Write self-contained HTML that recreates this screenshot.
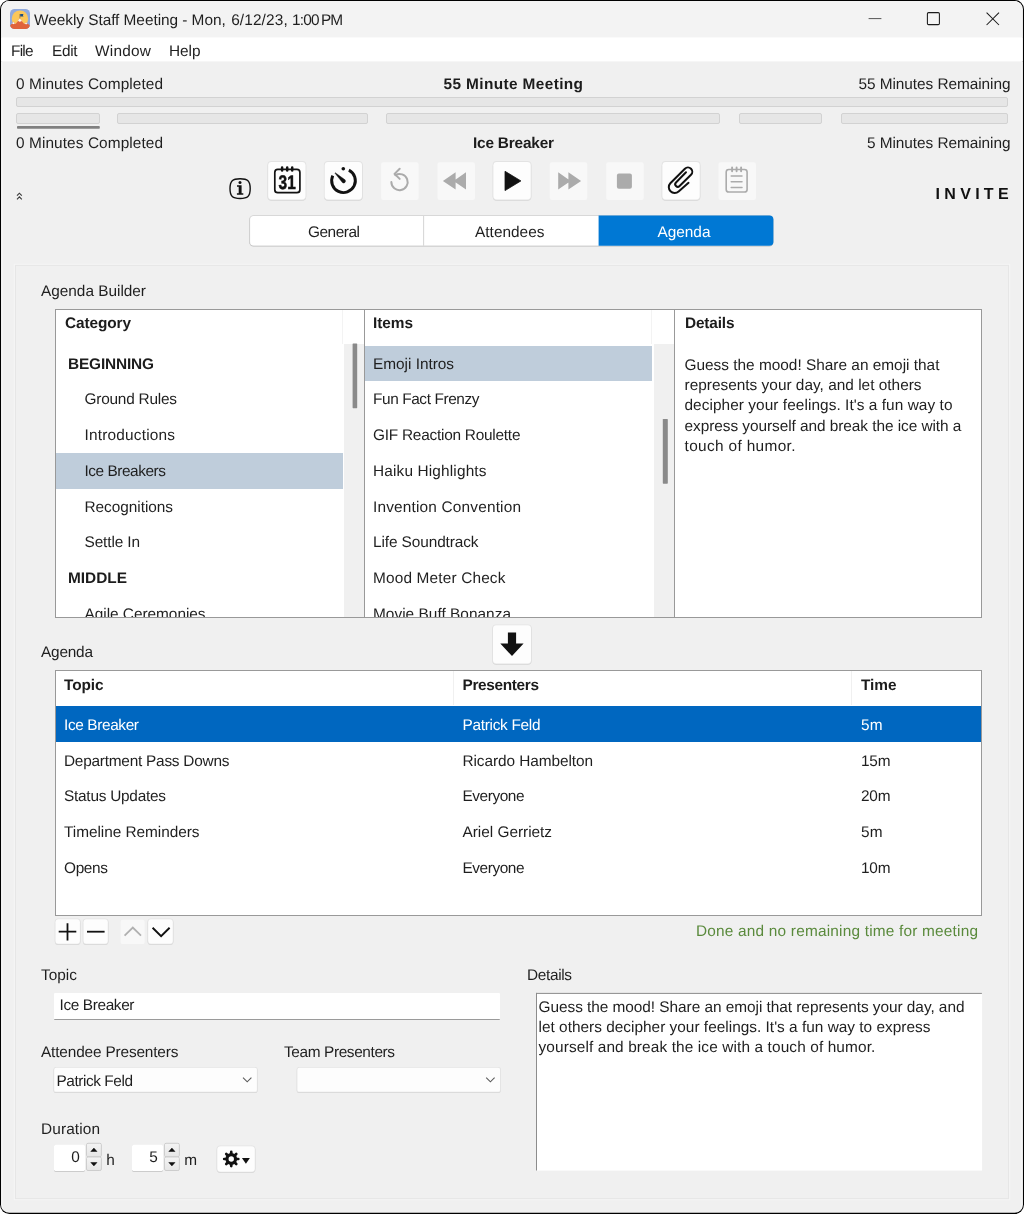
<!DOCTYPE html>
<html lang="en">
<head>
<meta charset="utf-8">
<title>Weekly Staff Meeting - Mon, 6/12/23, 1:00 PM</title>
<style>
html,body{margin:0;padding:0;}
body{width:1024px;height:1214px;overflow:hidden;background:#fff;font-family:"Liberation Sans", sans-serif;color:#1f1f1f;text-rendering:geometricPrecision;}
#win{will-change:transform;position:relative;width:1024px;height:1214px;overflow:hidden;}
.a{position:absolute;box-sizing:border-box;}
.t{position:absolute;white-space:pre;}
svg{position:absolute;overflow:visible;}
</style>
</head>
<body>
<div id="win">
<svg style="left:0;top:0" width="1024" height="1214" viewBox="0 0 1024 1214"><defs><clipPath id="wc"><rect x="1.1" y="1.1" width="1021.7" height="1211.7" rx="8.2"/></clipPath></defs><rect x="0" y="0" width="1024" height="1214" rx="9.4" fill="#000"/><g clip-path="url(#wc)"><rect x="0" y="0" width="1024" height="1214" fill="#f0f0f0"/><rect x="0" y="62" width="3" height="1152" fill="#f4f4f4"/><rect x="1020.8" y="62" width="4" height="1152" fill="#f4f4f4"/><rect x="0" y="0" width="1024" height="37.4" fill="#f3f3f3"/><rect x="0" y="37.4" width="1024" height="24" fill="#ffffff"/></g></svg>
<svg style="left:9.9px;top:9px" width="20" height="20" viewBox="0 0 20 20">
<defs><clipPath id="ic"><rect x="0" y="0" width="20" height="20" rx="4.6"/></clipPath></defs>
<g clip-path="url(#ic)">
<rect width="20" height="20" fill="#90a9dc"/>
<circle cx="9.95" cy="9.65" r="8.2" fill="#fbc75a"/>
<path d="M9.8 9.2L12.2 12.4L14.2 15L16.1 13.5L20 16.6V20H0V16.4L3.5 12.9L5.6 15L7.6 12.4Z" fill="#e0633c"/>
<path d="M9.8 9.2L12.3 12.6L11.2 12.1L9.9 12.9L8.6 12.1L7.5 12.6Z" fill="#f4f6fb"/>
<path d="M3.5 12.9L5.5 15L4.4 14.6L3.5 15.2L2.6 14.6L1.3 15.1Z" fill="#f4f6fb"/>
<path d="M16.1 13.5L18 15.2L17 14.8L16.1 15.4L15.2 14.8L14.3 15.1Z" fill="#f4f6fb"/>
<path d="M9.9 9.4V5" stroke="#5a4a3a" stroke-width="0.5" fill="none"/>
<path d="M10.2 5.1H13.5L12.9 6.3L13.5 7.5H10.2Z" fill="#1f4f82"/>
</g></svg>
<span class="t" style="left:34px;top:10px;font-size:15.4px;line-height:22px;letter-spacing:-0.04px;">Weekly Staff Meeting - Mon, </span>
<span class="t" style="left:231.2px;top:10px;font-size:15.4px;line-height:22px;letter-spacing:0.12px;">6/12/23, </span>
<span class="t" style="left:292.1px;top:10px;font-size:15.4px;line-height:22px;letter-spacing:-0.84px;">1:00 PM</span>
<svg style="left:860px;top:8px" width="150" height="24" viewBox="860 8 150 24" fill="none" stroke="#1a1a1a">
<path d="M868.6 18.6H881.4" stroke="#555" stroke-width="1"/>
<rect x="927.4" y="12.6" width="12" height="12" rx="1.2" stroke-width="1.05"/>
<path d="M986.6 12.6L999 25M999 12.6L986.6 25" stroke-width="1.05"/>
</svg>
<span class="t" style="left:11px;top:41px;font-size:15.4px;line-height:22px;letter-spacing:-0.77px;">File</span>
<span class="t" style="left:52px;top:41px;font-size:15.4px;line-height:22px;letter-spacing:-0.34px;">Edit</span>
<span class="t" style="left:95px;top:41px;font-size:15.4px;line-height:22px;letter-spacing:0.25px;">Window</span>
<span class="t" style="left:169px;top:41px;font-size:15.4px;line-height:22px;letter-spacing:-0.05px;">Help</span>
<span class="t" style="left:16px;top:74px;font-size:15.4px;line-height:22px;letter-spacing:0.09px;">0 Minutes Completed</span>
<span class="t" style="left:443.5px;top:74px;font-size:15.4px;line-height:22px;font-weight:700;color:#1c1c1c;letter-spacing:0.38px;">55 Minute Meeting</span>
<span class="t" style="left:858.5px;top:74px;font-size:15.4px;line-height:22px;letter-spacing:-0.06px;">55 Minutes Remaining</span>
<div class="a" style="left:16px;top:97px;width:992px;height:10px;background:#e6e6e6;border:1px solid #d2d2d2;border-radius:2px;"></div>
<div class="a" style="left:16px;top:113px;width:84px;height:11px;background:#e6e6e6;border:1px solid #d2d2d2;border-radius:2px;"></div>
<div class="a" style="left:117px;top:113px;width:251px;height:11px;background:#e6e6e6;border:1px solid #d2d2d2;border-radius:2px;"></div>
<div class="a" style="left:386px;top:113px;width:334px;height:11px;background:#e6e6e6;border:1px solid #d2d2d2;border-radius:2px;"></div>
<div class="a" style="left:739px;top:113px;width:83px;height:11px;background:#e6e6e6;border:1px solid #d2d2d2;border-radius:2px;"></div>
<div class="a" style="left:841px;top:113px;width:167px;height:11px;background:#e6e6e6;border:1px solid #d2d2d2;border-radius:2px;"></div>
<svg style="left:10px;top:120px" width="100" height="12" viewBox="10 120 100 12"><rect x="17" y="126.1" width="82.8" height="2.6" rx="0.8" fill="#808080"/></svg>
<span class="t" style="left:16px;top:133px;font-size:15.4px;line-height:22px;letter-spacing:0.09px;">0 Minutes Completed</span>
<span class="t" style="left:473px;top:133px;font-size:15.4px;line-height:22px;font-weight:700;color:#1c1c1c;letter-spacing:-0.2px;">Ice Breaker</span>
<span class="t" style="left:867px;top:133px;font-size:15.4px;line-height:22px;letter-spacing:-0.06px;">5 Minutes Remaining</span>
<svg style="left:0;top:150px" width="1024" height="60" viewBox="0 150 1024 60"><path d="M17 195.6L19.4 193.2L21.8 195.6M17 199.3L19.4 196.9L21.8 199.3" fill="none" stroke="#3a3a3a" stroke-width="1.15"/><path d="M240.1 178.7C247.6 178.7 250.2 180.6 250.2 188.6C250.2 196.6 247.6 198.5 240.1 198.5C232.6 198.5 230 196.6 230 188.6C230 180.6 232.6 178.7 240.1 178.7Z" fill="none" stroke="#111" stroke-width="1.4"/><circle cx="240" cy="182.5" r="1.5" fill="#111"/><path d="M237 185.2H241.6V193.3H243.3V194.8H236.9V193.3H238.7V186.7H237Z" fill="#111"/><rect x="267.6" y="162.0" width="38.5" height="38.8" rx="4" fill="#d2d2d2"/><rect x="267.4" y="161.1" width="38.9" height="39.2" rx="4" fill="#e3e3e3"/><rect x="268.2" y="161.9" width="37.3" height="37.6" rx="3.4" fill="#fdfdfd"/><rect x="324.1" y="162.0" width="38.5" height="38.8" rx="4" fill="#d2d2d2"/><rect x="323.9" y="161.1" width="38.9" height="39.2" rx="4" fill="#e3e3e3"/><rect x="324.7" y="161.9" width="37.3" height="37.6" rx="3.4" fill="#fdfdfd"/><rect x="381.10" y="162.30" width="37.50" height="37.60" rx="2.2" fill="#f8f8f8"/><rect x="437.50" y="162.30" width="37.50" height="37.60" rx="2.2" fill="#f8f8f8"/><rect x="492.8" y="162.0" width="38.5" height="38.8" rx="4" fill="#d2d2d2"/><rect x="492.6" y="161.1" width="38.9" height="39.2" rx="4" fill="#e3e3e3"/><rect x="493.4" y="161.9" width="37.3" height="37.6" rx="3.4" fill="#fdfdfd"/><rect x="549.80" y="162.30" width="37.50" height="37.60" rx="2.2" fill="#f8f8f8"/><rect x="606.20" y="162.30" width="37.50" height="37.60" rx="2.2" fill="#f8f8f8"/><rect x="661.8" y="162.0" width="38.5" height="38.8" rx="4" fill="#d2d2d2"/><rect x="661.6" y="161.1" width="38.9" height="39.2" rx="4" fill="#e3e3e3"/><rect x="662.4" y="161.9" width="37.3" height="37.6" rx="3.4" fill="#fdfdfd"/><rect x="718.50" y="162.30" width="37.50" height="37.60" rx="2.2" fill="#f8f8f8"/><rect x="274.8" y="169.4" width="25.1" height="23.3" rx="3" fill="none" stroke="#111" stroke-width="1.7"/><path d="M282.1 167.6V170.6M287.2 167.6V170.6M292.2 167.6V170.6" stroke="#111" stroke-width="2.5" stroke-linecap="round"/><text transform="translate(287.2 188.7) scale(0.78 1)" text-anchor="middle" font-family="'Liberation Sans',sans-serif" font-weight="700" font-size="19.8" fill="#111" stroke="#111" stroke-width="0.5">31</text><path d="M348.88 170.14A11.85 11.85 0 1 1 332.76 175.7" fill="none" stroke="#111" stroke-width="2.9"/><circle cx="343.3" cy="168.8" r="1.8" fill="#111"/><path d="M335.31 172.69L345.04 179.86A1.9 1.9 0 0 1 342.36 182.54L334.89 173.11Z" fill="#111" stroke="#111" stroke-width="0.4" stroke-linejoin="round"/><path d="M395.3 175.1A8.15 8.15 0 1 1 391.35 182.1" fill="none" stroke="#ababab" stroke-width="2" stroke-linecap="round"/><path d="M399.7 168.8L394.5 173.9L399.7 178.9" fill="none" stroke="#ababab" stroke-width="2" stroke-linecap="round" stroke-linejoin="round"/><path d="M455.6 172.2V189.6L442.9 180.9Z M466 172.2V189.6L453.6 180.9Z" fill="#ababab"/><path d="M505 171.3L520.9 180.9L505 190.6Z" fill="#111" stroke="#111" stroke-width="0.8" stroke-linejoin="round"/><path d="M558.2 172.2V189.6L570.6 180.9Z M568.4 172.2V189.6L581.1 180.9Z" fill="#ababab"/><rect x="616.9" y="173.6" width="15" height="15.2" rx="2" fill="#ababab"/><path d="M688.54 182.85L678.62 191.48A5.86 5.86 0 0 1 670.34 183.2L684.91 168.67A4.3 4.3 0 0 1 691 174.77L679.59 186.02A2.54 2.54 0 0 1 676 182.42L686 172.3" fill="none" stroke="#111" stroke-width="2" stroke-linecap="round" stroke-linejoin="round"/><rect x="726.2" y="169.5" width="20.9" height="22.5" rx="2.6" fill="none" stroke="#ababab" stroke-width="1.6"/><path d="M732.1 167.4V171.2M736.6 167.4V171.2M741.1 167.4V171.2" stroke="#ababab" stroke-width="1.9" stroke-linecap="round"/><path d="M731.2 176.1H742M731.2 181.7H742M731.2 187.4H742" stroke="#ababab" stroke-width="1.5" stroke-linecap="round"/></svg>
<span class="t" style="left:935.6px;top:184px;font-size:16px;line-height:22px;font-weight:700;color:#111;letter-spacing:4.29px;">INVITE</span>
<svg style="left:240px;top:210px" width="540" height="42" viewBox="240 210 540 42"><rect x="249.3" y="215.7" width="524" height="30.9" rx="4.2" fill="#b9b9b9"/><rect x="249.3" y="215.2" width="524" height="30.9" rx="4.2" fill="#d4d4d4"/><rect x="250.1" y="216" width="522.4" height="29.6" rx="3.5" fill="#ffffff"/><rect x="423.2" y="216" width="0.9" height="29.8" fill="#d0d0d0"/><path d="M598.6 215.6H769.4A4 4 0 0 1 773.4 219.6V241.8A4 4 0 0 1 769.4 245.8H598.6Z" fill="#0078d4"/></svg>
<span class="t" style="left:308px;top:222px;font-size:15.4px;line-height:22px;letter-spacing:-0.46px;">General</span>
<span class="t" style="left:475px;top:222px;font-size:15.4px;line-height:22px;letter-spacing:0.02px;">Attendees</span>
<span class="t" style="left:657.5px;top:222px;font-size:15.4px;line-height:22px;color:#ffffff;letter-spacing:-0.02px;">Agenda</span>
<svg style="left:0;top:260px" width="1024" height="945" viewBox="0 260 1024 945" fill="none"><rect x="14.2" y="264.3" width="995.6" height="935.4" stroke="#f5f5f5" stroke-width="1"/><rect x="15.55" y="265.4" width="993" height="933.2" stroke="#e5e5e5" stroke-width="0.9"/></svg>
<span class="t" style="left:41px;top:281px;font-size:15.4px;line-height:22px;letter-spacing:-0.02px;">Agenda Builder</span>
<div class="a" style="left:55px;top:309px;width:927px;height:308.5px;background:#ffffff;border:1px solid #999999;"></div>
<div class="a" style="left:364px;top:310px;width:1px;height:306.5px;background:#999999;"></div>
<div class="a" style="left:674px;top:310px;width:1px;height:306.5px;background:#999999;"></div>
<div class="a" style="left:56px;top:452.75px;width:286.5px;height:35.75px;background:#bfcddb;"></div>
<div class="a" style="left:344px;top:344px;width:20px;height:272.5px;background:#f0f0f0;"></div>
<div class="a" style="left:342px;top:310px;width:1px;height:34px;background:#f3f3f3;"></div>
<svg style="left:340px;top:340px" width="30" height="80" viewBox="340 340 30 80"><rect x="352.6" y="343.4" width="4.6" height="64.8" rx="0.6" fill="#8a8a8a"/></svg>
<span class="t" style="left:65px;top:313px;font-size:15.4px;line-height:22px;font-weight:700;color:#1c1c1c;letter-spacing:-0.1px;">Category</span>
<div class="a" style="left:365px;top:345.5px;width:287px;height:35.75px;background:#bfcddb;"></div>
<div class="a" style="left:653.5px;top:344px;width:20.5px;height:272.5px;background:#f0f0f0;"></div>
<div class="a" style="left:651px;top:310px;width:1px;height:34px;background:#f3f3f3;"></div>
<svg style="left:650px;top:410px" width="30" height="80" viewBox="650 410 30 80"><rect x="662.8" y="418.9" width="5" height="64.8" rx="0.6" fill="#8a8a8a"/></svg>
<span class="t" style="left:373px;top:313px;font-size:15.4px;line-height:22px;font-weight:700;color:#1c1c1c;letter-spacing:-0.05px;">Items</span>
<div class="a" style="left:56px;top:310px;width:925px;height:306.5px;overflow:hidden;background:transparent">
<span class="t" style="left:12px;top:44px;font-size:15.4px;line-height:22px;font-weight:700;color:#1c1c1c;letter-spacing:-0.15px;">BEGINNING</span>
<span class="t" style="left:28.5px;top:79px;font-size:15.4px;line-height:22px;letter-spacing:-0.22px;">Ground Rules</span>
<span class="t" style="left:28.5px;top:115px;font-size:15.4px;line-height:22px;letter-spacing:0.2px;">Introductions</span>
<span class="t" style="left:28.5px;top:151px;font-size:15.4px;line-height:22px;letter-spacing:-0.45px;">Ice Breakers</span>
<span class="t" style="left:28.5px;top:187px;font-size:15.4px;line-height:22px;letter-spacing:-0.04px;">Recognitions</span>
<span class="t" style="left:28.5px;top:222px;font-size:15.4px;line-height:22px;letter-spacing:-0.12px;">Settle In</span>
<span class="t" style="left:12px;top:258px;font-size:15.4px;line-height:22px;font-weight:700;color:#1c1c1c;">MIDDLE</span>
<span class="t" style="left:28.5px;top:294px;font-size:15.4px;line-height:22px;letter-spacing:-0.03px;">Agile Ceremonies</span>
<span class="t" style="left:317px;top:44px;font-size:15.4px;line-height:22px;letter-spacing:-0.02px;">Emoji Intros</span>
<span class="t" style="left:317px;top:79px;font-size:15.4px;line-height:22px;letter-spacing:-0.4px;">Fun Fact Frenzy</span>
<span class="t" style="left:317px;top:115px;font-size:15.4px;line-height:22px;letter-spacing:-0.24px;">GIF Reaction Roulette</span>
<span class="t" style="left:317px;top:151px;font-size:15.4px;line-height:22px;letter-spacing:0.15px;">Haiku Highlights</span>
<span class="t" style="left:317px;top:187px;font-size:15.4px;line-height:22px;letter-spacing:0.18px;">Invention Convention</span>
<span class="t" style="left:317px;top:222px;font-size:15.4px;line-height:22px;letter-spacing:-0.1px;">Life Soundtrack</span>
<span class="t" style="left:317px;top:258px;font-size:15.4px;line-height:22px;letter-spacing:0.16px;">Mood Meter Check</span>
<span class="t" style="left:317px;top:294px;font-size:15.4px;line-height:22px;letter-spacing:0.03px;">Movie Buff Bonanza</span>
</div>
<span class="t" style="left:685px;top:313px;font-size:15.4px;line-height:22px;font-weight:700;color:#1c1c1c;letter-spacing:-0.16px;">Details</span>
<span class="t" style="left:684.5px;top:355px;font-size:15.4px;line-height:22px;">Guess the mood! Share an emoji that</span>
<span class="t" style="left:684.5px;top:375px;font-size:15.4px;line-height:22px;letter-spacing:0.01px;">represents your day, and let others</span>
<span class="t" style="left:684.5px;top:395px;font-size:15.4px;line-height:22px;letter-spacing:0.06px;">decipher your feelings. It&#x27;s a fun way to</span>
<span class="t" style="left:684.5px;top:416px;font-size:15.4px;line-height:22px;letter-spacing:-0.05px;">express yourself and break the ice with a</span>
<span class="t" style="left:684.5px;top:436px;font-size:15.4px;line-height:22px;letter-spacing:0.35px;">touch of humor.</span>
<svg style="left:480px;top:620px" width="64" height="50" viewBox="480 620 64 50"><rect x="492.4" y="625.4" width="39.2" height="39.3" rx="4" fill="#d2d2d2"/><rect x="492.2" y="624.5" width="39.6" height="39.7" rx="4" fill="#e3e3e3"/><rect x="493.0" y="625.3" width="38.0" height="38.1" rx="3.4" fill="#fdfdfd"/><path d="M507.9 632.6H516.1V643.4H523.6L512 656.1L500.3 643.4H507.9Z" fill="#111"/></svg>
<span class="t" style="left:41px;top:642px;font-size:15.4px;line-height:22px;letter-spacing:-0.22px;">Agenda</span>
<div class="a" style="left:55px;top:670px;width:927px;height:246px;background:#ffffff;border:1px solid #999999;"></div>
<div class="a" style="left:452.5px;top:671px;width:1px;height:34px;background:#f0f0f0;"></div>
<div class="a" style="left:850.5px;top:671px;width:1px;height:34px;background:#f0f0f0;"></div>
<div class="a" style="left:56px;top:706px;width:925px;height:36px;background:#0067c0;"></div>
<span class="t" style="left:64px;top:675px;font-size:15.4px;line-height:22px;font-weight:700;color:#1c1c1c;letter-spacing:-0.1px;">Topic</span>
<span class="t" style="left:462.5px;top:675px;font-size:15.4px;line-height:22px;font-weight:700;color:#1c1c1c;letter-spacing:-0.34px;">Presenters</span>
<span class="t" style="left:861px;top:675px;font-size:15.4px;line-height:22px;font-weight:700;color:#1c1c1c;letter-spacing:-0.05px;">Time</span>
<span class="t" style="left:64px;top:715px;font-size:15.4px;line-height:22px;color:#ffffff;letter-spacing:-0.37px;">Ice Breaker</span>
<span class="t" style="left:462.5px;top:715px;font-size:15.4px;line-height:22px;color:#ffffff;letter-spacing:-0.3px;">Patrick Feld</span>
<span class="t" style="left:861px;top:715px;font-size:15.4px;line-height:22px;color:#ffffff;letter-spacing:0.11px;">5m</span>
<span class="t" style="left:64px;top:751px;font-size:15.4px;line-height:22px;letter-spacing:-0.24px;">Department Pass Downs</span>
<span class="t" style="left:462.5px;top:751px;font-size:15.4px;line-height:22px;letter-spacing:-0.08px;">Ricardo Hambelton</span>
<span class="t" style="left:861px;top:751px;font-size:15.4px;line-height:22px;letter-spacing:-0.23px;">15m</span>
<span class="t" style="left:64px;top:786px;font-size:15.4px;line-height:22px;letter-spacing:-0.25px;">Status Updates</span>
<span class="t" style="left:462.5px;top:786px;font-size:15.4px;line-height:22px;letter-spacing:-0.43px;">Everyone</span>
<span class="t" style="left:861px;top:786px;font-size:15.4px;line-height:22px;letter-spacing:-0.23px;">20m</span>
<span class="t" style="left:64px;top:822px;font-size:15.4px;line-height:22px;letter-spacing:-0.05px;">Timeline Reminders</span>
<span class="t" style="left:462.5px;top:822px;font-size:15.4px;line-height:22px;letter-spacing:-0.02px;">Ariel Gerrietz</span>
<span class="t" style="left:861px;top:822px;font-size:15.4px;line-height:22px;letter-spacing:0.11px;">5m</span>
<span class="t" style="left:64px;top:858px;font-size:15.4px;line-height:22px;letter-spacing:-0.34px;">Opens</span>
<span class="t" style="left:462.5px;top:858px;font-size:15.4px;line-height:22px;letter-spacing:-0.43px;">Everyone</span>
<span class="t" style="left:861px;top:858px;font-size:15.4px;line-height:22px;letter-spacing:-0.23px;">10m</span>
<svg style="left:0;top:910px" width="1024" height="44" viewBox="0 910 1024 44"><rect x="54.9" y="919.4" width="25.6" height="25.6" rx="3.5" fill="#d2d2d2"/><rect x="54.7" y="918.5" width="26.0" height="26.0" rx="3.5" fill="#e3e3e3"/><rect x="55.5" y="919.3" width="24.4" height="24.4" rx="2.9" fill="#fdfdfd"/><rect x="82.9" y="919.4" width="25.5" height="25.6" rx="3.5" fill="#d2d2d2"/><rect x="82.7" y="918.5" width="25.9" height="26.0" rx="3.5" fill="#e3e3e3"/><rect x="83.5" y="919.3" width="24.3" height="24.4" rx="2.9" fill="#fdfdfd"/><rect x="120.60" y="919.70" width="24.00" height="24.40" rx="2.2" fill="#f8f8f8"/><rect x="147.6" y="919.4" width="25.8" height="25.6" rx="3.5" fill="#d2d2d2"/><rect x="147.4" y="918.5" width="26.2" height="26.0" rx="3.5" fill="#e3e3e3"/><rect x="148.2" y="919.3" width="24.6" height="24.4" rx="2.9" fill="#fdfdfd"/><path d="M58.7 931.7H76.3M67.5 923.2V940.6" fill="none" stroke="#111" stroke-width="1.8"/><path d="M87 931.7H104.6" fill="none" stroke="#111" stroke-width="1.8"/><path d="M124.6 935.6L132.8 927.6L141 935.6" fill="none" stroke="#b0b0b0" stroke-width="1.8"/><path d="M152.6 927.8L161.1 936.2L169.6 927.8" fill="none" stroke="#111" stroke-width="1.9"/></svg>
<span class="t" style="left:696px;top:921px;font-size:15.4px;line-height:22px;color:#5a8a3c;letter-spacing:0.2px;">Done and no remaining time for meeting</span>
<span class="t" style="left:41px;top:965px;font-size:15.4px;line-height:22px;letter-spacing:0.02px;">Topic</span>
<div class="a" style="left:54px;top:993px;width:446px;height:27px;background:#ffffff;border-bottom:1px solid #9a9a9a;border-radius:1px;"></div>
<span class="t" style="left:59.5px;top:995px;font-size:15.4px;line-height:22px;letter-spacing:-0.37px;">Ice Breaker</span>
<span class="t" style="left:527px;top:965px;font-size:15.4px;line-height:22px;letter-spacing:-0.34px;">Details</span>
<svg style="left:530px;top:988px" width="460" height="190" viewBox="530 988 460 190"><rect x="536.5" y="993.4" width="445.6" height="177.2" fill="#ffffff"/><rect x="536" y="992.9" width="445.9" height="1" fill="#8c8c8c"/><rect x="536" y="992.9" width="1" height="177.6" fill="#8c8c8c"/></svg>
<span class="t" style="left:538.5px;top:997px;font-size:15.4px;line-height:22px;letter-spacing:-0.04px;">Guess the mood! Share an emoji that represents your day, and</span>
<span class="t" style="left:538.5px;top:1017px;font-size:15.4px;line-height:22px;letter-spacing:0.01px;">let others decipher your feelings. It&#x27;s a fun way to express</span>
<span class="t" style="left:538.5px;top:1037px;font-size:15.4px;line-height:22px;letter-spacing:0.12px;">yourself and break the ice with a touch of humor.</span>
<span class="t" style="left:41px;top:1042px;font-size:15.4px;line-height:22px;letter-spacing:-0.16px;">Attendee Presenters</span>
<span class="t" style="left:284px;top:1042px;font-size:15.4px;line-height:22px;letter-spacing:-0.38px;">Team Presenters</span>
<svg style="left:40px;top:1060px" width="480" height="40" viewBox="40 1060 480 40"><rect x="53.6" y="1067.9" width="203.9" height="25.2" rx="2.5" fill="#d2d2d2"/><rect x="53.4" y="1067.0" width="204.3" height="25.6" rx="2.5" fill="#e3e3e3"/><rect x="54.2" y="1067.8" width="202.7" height="24.0" rx="1.9" fill="#fdfdfd"/><path d="M243.0 1077.6L247.2 1081.8L251.4 1077.6" fill="none" stroke="#5a5a5a" stroke-width="1.1"/><rect x="296.8" y="1067.9" width="203.9" height="25.2" rx="2.5" fill="#d2d2d2"/><rect x="296.6" y="1067.0" width="204.3" height="25.6" rx="2.5" fill="#e3e3e3"/><rect x="297.4" y="1067.8" width="202.7" height="24.0" rx="1.9" fill="#fdfdfd"/><path d="M486.2 1077.6L490.4 1081.8L494.6 1077.6" fill="none" stroke="#5a5a5a" stroke-width="1.1"/></svg>
<span class="t" style="left:56.5px;top:1071px;font-size:15.4px;line-height:22px;letter-spacing:-0.43px;">Patrick Feld</span>
<span class="t" style="left:41px;top:1119px;font-size:15.4px;line-height:22px;letter-spacing:0.12px;">Duration</span>
<svg style="left:0;top:1138px" width="1024" height="40" viewBox="0 1138 1024 40"><defs><linearGradient id="sg" x1="0" y1="0" x2="0" y2="1"><stop offset="0" stop-color="#f4f4f4"/><stop offset="1" stop-color="#e6e6e6"/></linearGradient></defs><rect x="54" y="1144.6" width="31" height="27" rx="1.5" fill="#a8a8a8"/><rect x="54" y="1144.2" width="31" height="26.8" rx="1.5" fill="#ffffff"/><rect x="86.5" y="1143.3" width="14.9" height="13.5" rx="1.5" fill="url(#sg)" stroke="#c9c9c9" stroke-width="0.9"/><rect x="86.5" y="1157" width="14.9" height="13.5" rx="1.5" fill="url(#sg)" stroke="#c9c9c9" stroke-width="0.9"/><path d="M90.8 1151.5L93.9 1148.1L97.0 1151.5Z M90.8 1162.5L93.9 1165.9L97.0 1162.5Z" fill="#111" stroke="#111" stroke-width="0.5" stroke-linejoin="round"/><rect x="132" y="1144.6" width="31" height="27" rx="1.5" fill="#a8a8a8"/><rect x="132" y="1144.2" width="31" height="26.8" rx="1.5" fill="#ffffff"/><rect x="164.5" y="1143.3" width="14.9" height="13.5" rx="1.5" fill="url(#sg)" stroke="#c9c9c9" stroke-width="0.9"/><rect x="164.5" y="1157" width="14.9" height="13.5" rx="1.5" fill="url(#sg)" stroke="#c9c9c9" stroke-width="0.9"/><path d="M168.8 1151.5L171.9 1148.1L175.0 1151.5Z M168.8 1162.5L171.9 1165.9L175.0 1162.5Z" fill="#111" stroke="#111" stroke-width="0.5" stroke-linejoin="round"/><rect x="216.7" y="1146.3" width="38.7" height="26.7" rx="4" fill="#d2d2d2"/><rect x="216.5" y="1145.4" width="39.1" height="27.1" rx="4" fill="#e3e3e3"/><rect x="217.3" y="1146.2" width="37.5" height="25.5" rx="3.4" fill="#fdfdfd"/><path d="M235.85 1159.00L238.30 1159.00M234.50 1162.25L236.24 1163.99M231.25 1163.60L231.25 1166.05M228.00 1162.25L226.26 1163.99M226.65 1159.00L224.20 1159.00M228.00 1155.75L226.26 1154.01M231.25 1154.40L231.25 1151.95M234.50 1155.75L236.24 1154.01" fill="none" stroke="#111" stroke-width="2.7" stroke-linecap="round"/><circle cx="231.25" cy="1159.0" r="4.3" fill="none" stroke="#111" stroke-width="3.2"/><path d="M241.9 1158.1H249.9L245.9 1163.7Z" fill="#111"/></svg>
<span class="t" style="left:71.2px;top:1147px;font-size:15.4px;line-height:22px;">0</span>
<span class="t" style="left:149.2px;top:1147px;font-size:15.4px;line-height:22px;">5</span>
<span class="t" style="left:106.2px;top:1150px;font-size:15.4px;line-height:22px;">h</span>
<span class="t" style="left:184.2px;top:1150px;font-size:15.4px;line-height:22px;">m</span>
</div>
</body>
</html>
